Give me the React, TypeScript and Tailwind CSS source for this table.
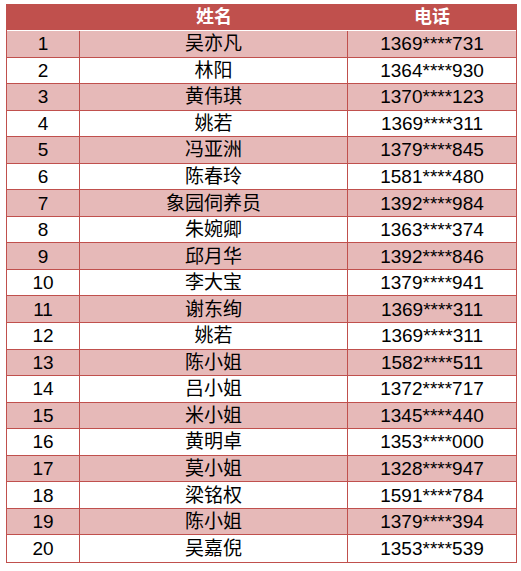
const rows: [number, string, string][] = [
  [1, "吴亦凡", "1369****731"],
  [2, "林阳", "1364****930"],
  [3, "黄伟琪", "1370****123"],
  [4, "姚若", "1369****311"],
  [5, "冯亚洲", "1379****845"],
  [6, "陈春玲", "1581****480"],
  [7, "象园伺养员", "1392****984"],
  [8, "朱婉卿", "1363****374"],
  [9, "邱月华", "1392****846"],
  [10, "李大宝", "1379****941"],
  [11, "谢东绚", "1369****311"],
  [12, "姚若", "1369****311"],
  [13, "陈小姐", "1582****511"],
  [14, "吕小姐", "1372****717"],
  [15, "米小姐", "1345****440"],
  [16, "黄明卓", "1353****000"],
  [17, "莫小姐", "1328****947"],
  [18, "梁铭权", "1591****784"],
  [19, "陈小姐", "1379****394"],
  [20, "吴嘉倪", "1353****539"],
];

export default function App() {
  return (
    <div
      className="w-[521px] h-[571px] bg-white pt-[4px] pl-[6px]"
      style={{ fontFamily: '"Liberation Sans", "Noto Sans CJK SC", sans-serif' }}
    >
      <div className="w-[511px] border-l border-r border-b border-[#c0504d]">
        {/* header */}
        <div className="flex h-[27px] bg-[#c0504d] border-b border-white text-white font-bold text-[18px] leading-none">
          <div className="w-[73px]" />
          <div className="w-[268px] flex items-center justify-center">姓名</div>
          <div className="flex-1 flex items-center justify-center">电话</div>
        </div>

        {rows.map(([no, name, phone], i) => (
          <div
            key={no}
            className={
              "flex h-[26.55px] text-[19px] leading-none text-black " +
              (i < rows.length - 1 ? "border-b border-[#c0504d] " : "") +
              (i % 2 === 0 ? "bg-[#e6b9b8]" : "bg-white")
            }
          >
            <div className="w-[73px] flex items-center justify-center border-r border-[#c0504d]">
              {no}
            </div>
            <div className="w-[268px] flex items-center justify-center border-r border-[#c0504d]">
              {name}
            </div>
            <div className="flex-1 flex items-center justify-center">{phone}</div>
          </div>
        ))}
      </div>
    </div>
  );
}
